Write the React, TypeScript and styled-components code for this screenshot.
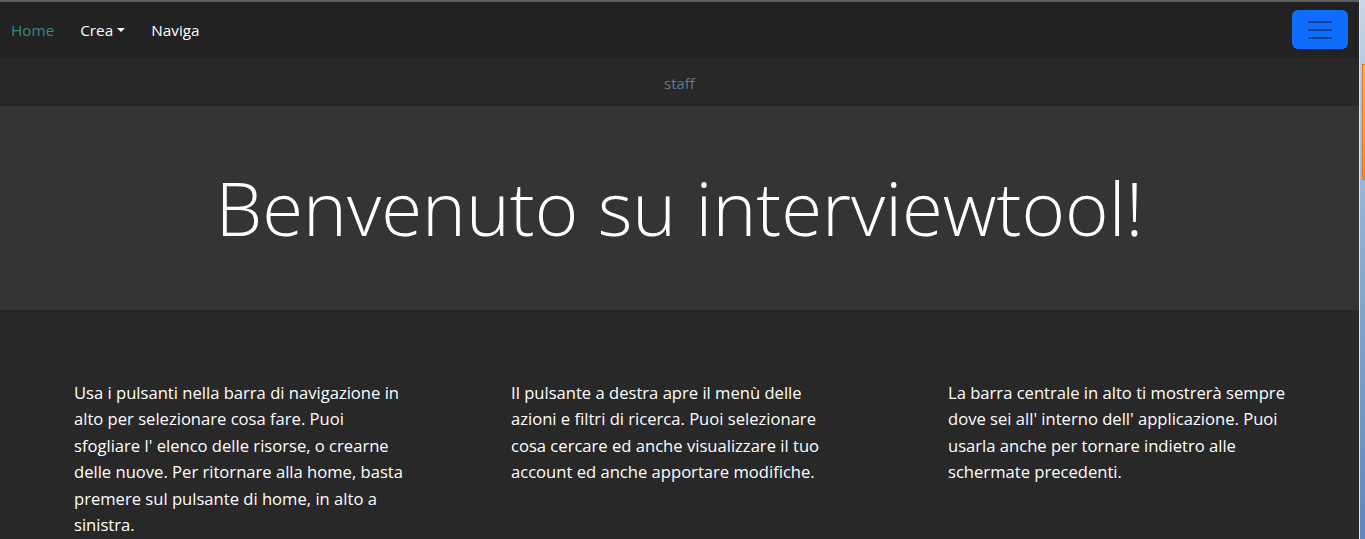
import React from 'react';
import styled, { createGlobalStyle } from 'styled-components';

const GlobalStyle = createGlobalStyle`
  html, body {
    margin: 0;
    padding: 0;
    background: #282828;
    overflow: hidden;
  }
  * {
    box-sizing: border-box;
  }
`;

const columns = [
  [
    'Usa i pulsanti nella barra di navigazione in',
    'alto per selezionare cosa fare. Puoi',
    "sfogliare l' elenco delle risorse, o crearne",
    'delle nuove. Per ritornare alla home, basta',
    'premere sul pulsante di home, in alto a',
    'sinistra.',
  ],
  [
    'Il pulsante a destra apre il menù delle',
    'azioni e filtri di ricerca. Puoi selezionare',
    'cosa cercare ed anche visualizzare il tuo',
    'account ed anche apportare modifiche.',
  ],
  [
    'La barra centrale in alto ti mostrerà sempre',
    "dove sei all' interno dell' applicazione. Puoi",
    'usarla anche per tornare indietro alle',
    'schermate precedenti.',
  ],
];

export default function App() {
  return (
    <>
      <GlobalStyle />
      <Page>
        <Main>
          <TopLine />
          <Navbar>
            <NavLinks>
              <NavLink active>Home</NavLink>
              <NavLink>
                Crea
                <Caret />
              </NavLink>
              <NavLink>Naviga</NavLink>
            </NavLinks>
            <Toggler aria-label="menu">
              <TogglerBar />
              <TogglerBar />
              <TogglerBar />
            </Toggler>
          </Navbar>
          <Breadcrumb>staff</Breadcrumb>
          <Hero>
            <HeroTitle>Benvenuto su interviewtool!</HeroTitle>
          </Hero>
          <Content>
            {columns.map((lines, i) => (
              <Column key={i}>
                {lines.map((line, j) => (
                  <Line key={j}>{line}</Line>
                ))}
              </Column>
            ))}
          </Content>
        </Main>
        <SideStrip>
          <StripTab />
        </SideStrip>
      </Page>
    </>
  );
}

const Page = styled.div`
  display: flex;
  width: 1365px;
  height: 539px;
  overflow: hidden;
  font-family: 'Open Sans', 'Noto Sans', sans-serif;
`;

const Main = styled.div`
  flex: 1;
  display: flex;
  flex-direction: column;
  background: #282828;
`;

const TopLine = styled.div`
  height: 2px;
  background: #5d5d5d;
`;

const Navbar = styled.nav`
  height: 56px;
  background: #222222;
  display: flex;
  align-items: center;
  justify-content: space-between;
  padding: 0 11px 0 11px;
`;

const NavLinks = styled.div`
  display: flex;
  align-items: center;
  gap: 26px;
`;

const NavLink = styled.a<{ active?: boolean }>`
  display: flex;
  align-items: center;
  font-size: 15.3px;
  color: ${p => (p.active ? '#35898a' : '#ffffff')};
  cursor: pointer;
`;

const Caret = styled.span`
  margin-left: 4px;
  width: 0;
  height: 0;
  border-left: 4px solid transparent;
  border-right: 4px solid transparent;
  border-top: 4px solid #ffffff;
`;

const Toggler = styled.button`
  width: 56px;
  height: 39px;
  margin-top: -1px;
  border: none;
  border-radius: 6px;
  background: #0d6efd;
  display: flex;
  flex-direction: column;
  align-items: center;
  justify-content: center;
  gap: 6px;
  padding: 0;
  cursor: pointer;
`;

const TogglerBar = styled.span`
  width: 24px;
  height: 2px;
  background: #0a3f8c;
`;

const Breadcrumb = styled.div`
  height: 48px;
  background: #282828;
  display: flex;
  align-items: center;
  justify-content: center;
  color: #5f7a8c;
  font-size: 15px;
  padding-top: 2px;
`;

const Hero = styled.section`
  height: 204px;
  background: #343434;
  display: flex;
  align-items: center;
  justify-content: center;
`;

const HeroTitle = styled.h1`
  margin: 0;
  font-weight: 300;
  font-size: 74.4px;
  color: #ffffff;
  line-height: 1.2;
`;

const Content = styled.section`
  flex: 1;
  background: #282828;
  display: grid;
  grid-template-columns: repeat(3, 437px);
  padding: 70px 0 0 26px;
`;

const Column = styled.div`
  padding: 0 0 0 48px;
  color: #ffffff;
  font-size: 16.6px;
  line-height: 26.4px;
`;

const Line = styled.div`
  white-space: nowrap;
`;

const SideStrip = styled.div`
  position: relative;
  width: 6px;
  background: linear-gradient(180deg, #c9d6e6 0%, #8fb0d8 40%, #5e86c0 100%);
  border-left: 1px solid #dfe8f3;
`;

const StripTab = styled.div`
  position: absolute;
  top: 64px;
  left: 2px;
  width: 6px;
  height: 116px;
  background: linear-gradient(180deg, #f5b46a, #f08a2c);
  border: 1px solid #e07820;
`;
